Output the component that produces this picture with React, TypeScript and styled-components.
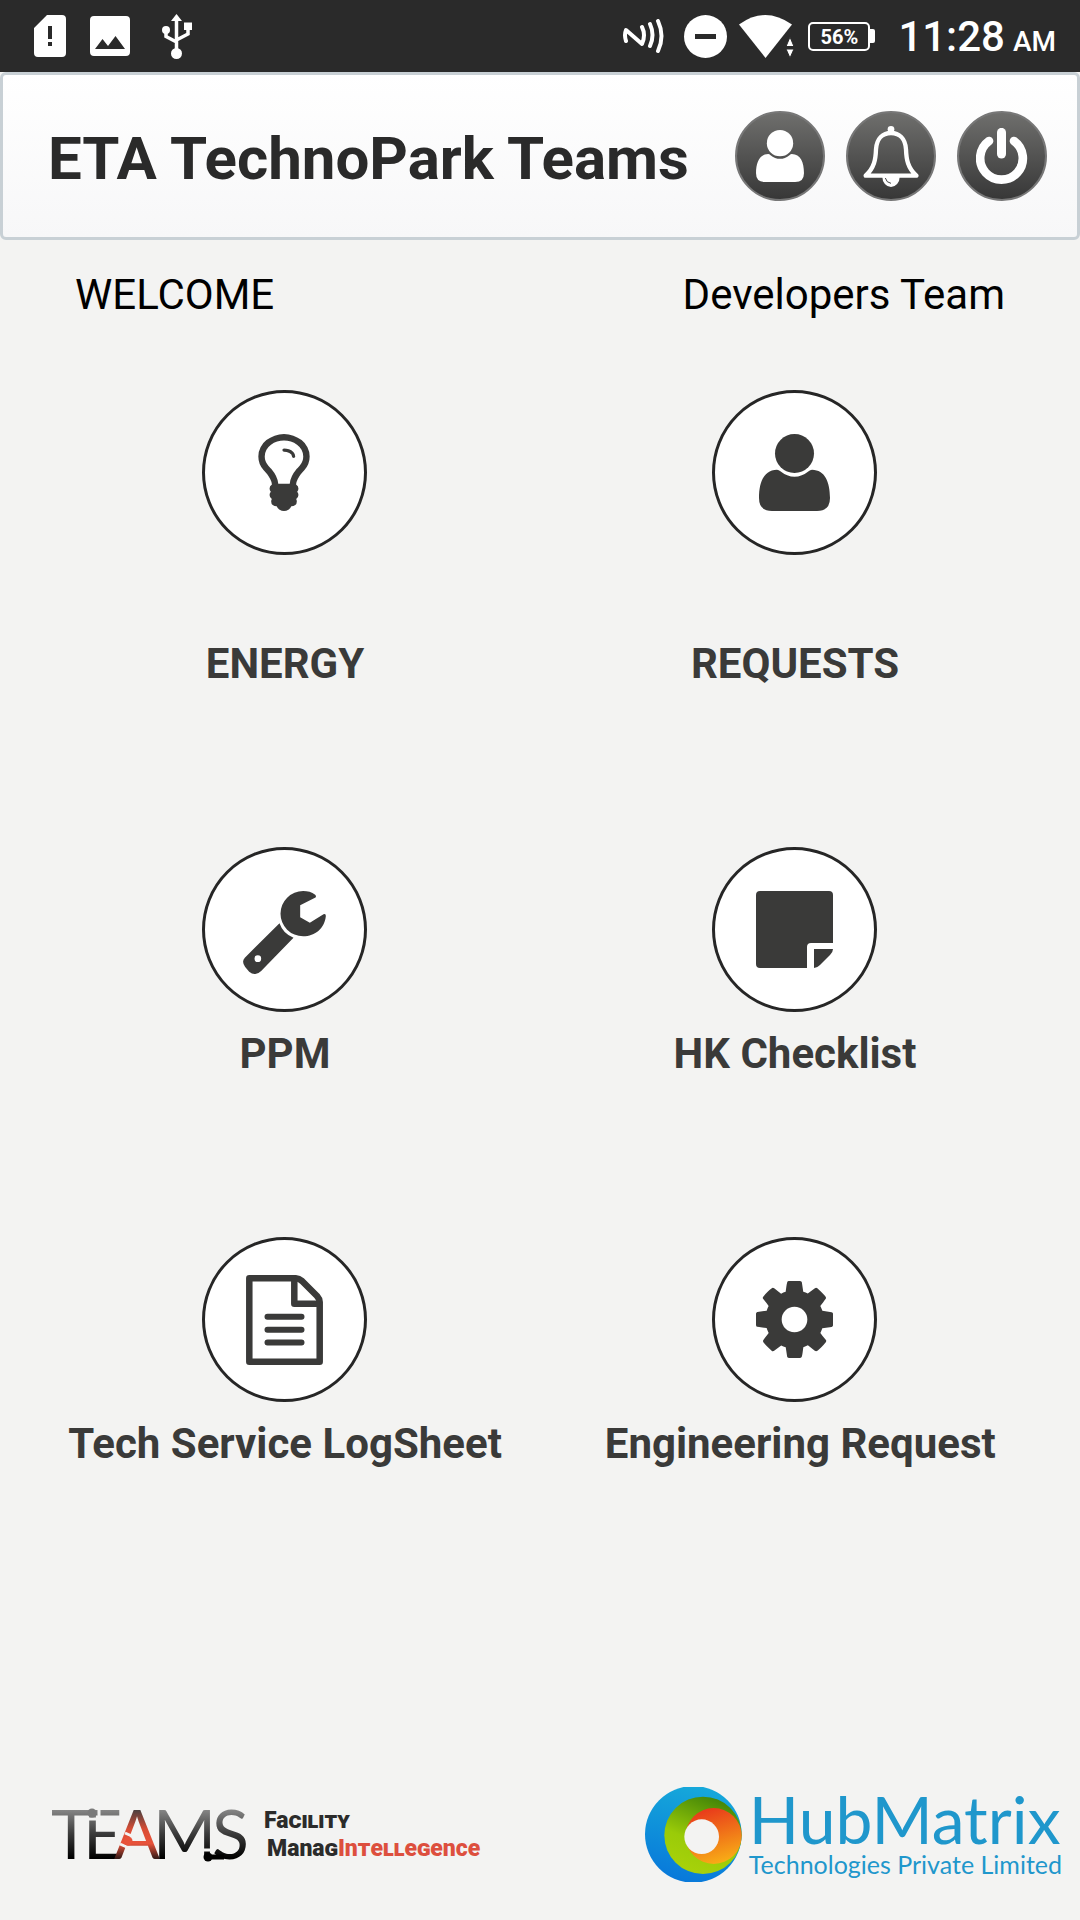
import React from "react";
import styled, { createGlobalStyle } from "styled-components";

const GlobalStyle = createGlobalStyle`
  * { box-sizing: border-box; }
  body { margin: 0; background: #f3f3f2; font-family: Roboto, "Liberation Sans", sans-serif; }
`;

const Page = styled.div`
  display: flex;
  flex-direction: column;
  min-height: 100vh;
`;

const StatusBar = styled.div`
  display: flex;
  align-items: center;
  justify-content: space-between;
  height: 72px;
  padding: 0 24px 0 34px;
  background: #2a2a2a;
  color: #fff;
`;

const StatusGroup = styled.div<{ $gap: number }>`
  display: flex;
  align-items: center;
  gap: ${(p) => p.$gap}px;
  svg { display: block; }
`;

const StatusSlot = styled.span<{ $before?: number; $after?: number }>`
  margin-left: ${(p) => p.$before ?? 0}px;
  margin-right: ${(p) => p.$after ?? 0}px;
`;

const Battery = styled.div`
  display: flex;
  align-items: center;
  margin-left: 2px;
  &::after {
    content: "";
    width: 5px;
    height: 14px;
    background: #fff;
    border-radius: 0 2px 2px 0;
  }
`;

const BatteryBody = styled.div`
  width: 62px;
  height: 29px;
  border: 2px solid #fff;
  border-radius: 5px;
  font-size: 20px;
  font-weight: 700;
  line-height: 26px;
  text-align: center;
`;

const Clock = styled.time`
  margin-left: 11px;
  padding-top: 6px;
  font-size: 42px;
  font-weight: 500;
  line-height: 50px;
  small { margin-left: 8px; font-size: 28px; }
`;

const Header = styled.header`
  display: flex;
  align-items: center;
  justify-content: space-between;
  height: 168px;
  padding: 0 30px 0 45px;
  border: 3px solid #c8d0d5;
  border-radius: 6px;
  background: linear-gradient(#ffffff, #f7f7f8);
`;

const Title = styled.h1`
  margin: 0;
  padding-top: 5px;
  font-size: 60px;
  font-weight: 700;
  line-height: 72px;
  color: #2a2a2a;
  white-space: nowrap;
`;

const Actions = styled.nav`
  display: flex;
  gap: 21px;
`;

const RoundButton = styled.button`
  display: grid;
  place-items: center;
  width: 90px;
  height: 90px;
  padding: 0;
  border: 2px solid #777;
  border-radius: 50%;
  background: linear-gradient(#70706e, #363636);
  background-origin: border-box;
  color: #fff;
  svg { display: block; }
`;

const Welcome = styled.section`
  display: flex;
  justify-content: space-between;
  padding: 30px 75px 0;
  font-size: 42px;
  line-height: 50px;
  color: #000;
`;

const Menu = styled.main`
  display: grid;
  grid-template-columns: 1fr 1fr;
  row-gap: 158px;
  padding: 70px 31px 70px 29px;
`;

const MenuItem = styled.button<{ $gap: number }>`
  display: flex;
  flex-direction: column;
  align-items: center;
  gap: ${(p) => p.$gap}px;
  padding: 0;
  border: 0;
  background: none;
  font: 700 42px/50px Roboto, "Liberation Sans", sans-serif;
  color: #3a3a39;
  white-space: pre;
`;

const Disc = styled.span`
  display: grid;
  place-items: center;
  width: 165px;
  height: 165px;
  border: 3px solid #262626;
  border-radius: 50%;
  background: #fff;
  svg { display: block; }
`;

const Label = styled.span`
  padding-left: 2px;
`;

const Footer = styled.footer`
  display: flex;
  align-items: center;
  justify-content: space-between;
  margin-top: auto;
  padding: 0 18px 38px 50px;
`;

const Brand = styled.div<{ $gap: number }>`
  display: flex;
  align-items: center;
  gap: ${(p) => p.$gap}px;
  svg { display: block; }
`;

const Tagline = styled.div`
  font-size: 23px;
  font-weight: 900;
  line-height: 28px;
  color: #2b2b2b;
  white-space: nowrap;
  div + div { padding-left: 3px; }
`;

const SmallCaps = styled.span`
  font-variant: small-caps;
`;

const Accent = styled.span`
  color: #dd4f3e;
`;

const HubText = styled.div`
  display: flex;
  flex-direction: column;
  padding-bottom: 4px;
  font-family: Lato, sans-serif;
  color: #1f97cc;
  white-space: nowrap;
`;

const HubName = styled.span`
  font-size: 66px;
  font-weight: 400;
  line-height: 62px;
`;

const HubSub = styled.span`
  font-size: 25px;
  font-weight: 400;
  line-height: 28px;
`;

const PersonIcon = ({ width, height }: { width: number; height: number }) => (
  <svg width={width} height={height} viewBox="0 0 71 77" fill="currentColor" aria-hidden="true">
    <circle cx="35.5" cy="19.5" r="19.5" />
    <path d="M18 35.7Q20 36 21 37Q35.5 48.500 50 37Q51 36 53 35.700C66 36 71 48 71 64Q71 77 58 77H13Q0 77 0 64C0 48 5 36 18 35.700Z" />
  </svg>
);

const BellIcon = () => (
  <svg width="56" height="61" viewBox="489 165 168 183" aria-hidden="true">
    <path d="M497 314C523 290 527 265 528 235C530 202 549 186 573 186C597 186 616 202 618 235C619 265 623 290 649 314Z" fill="none" stroke="#fff" strokeWidth="13" strokeLinejoin="round" />
    <circle cx="573" cy="175" r="10" fill="#fff" />
    <path d="M547 318a26 30 0 0 0 52 0Z" fill="#fff" />
    <path d="M556 321q3 14 17 16" fill="none" stroke="#444" strokeWidth="3" />
  </svg>
);

const PowerIcon = () => (
  <svg width="52" height="56" viewBox="828 166 156 168" fill="none" stroke="#fff" strokeLinecap="round" aria-hidden="true">
    <path d="M867 205A64 64 0 1 0 942 205" strokeWidth="26" />
    <path d="M904.500 179V244" strokeWidth="27" />
  </svg>
);

const BulbIcon = () => (
  <svg width="52" height="77" viewBox="0 128 1024 1536" fill="currentColor" aria-hidden="true">
    <path d="M736 576q0 13-9.500 22.500t-22.500 9.500-22.500-9.500-9.500-22.500q0-46-54-71t-106-25q-13 0-22.500-9.500t-9.500-22.500 9.500-22.500 22.500-9.500q50 0 99.500 16t87 54 37.500 90zm160 0q0-72-34.500-134t-90-101.500-123-62-136.500-22.500-136.500 22.500-123 62-90 101.500-34.500 134q0 101 68 180 10 11 30.500 33t30.500 33q128 153 141 298h228q13-145 141-298 10-11 30.500-33t30.500-33q68-79 68-180zm128 0q0 155-103 268-45 49-74.500 87t-59.500 95.500-34 107.500q47 28 47 82 0 37-25 64 25 27 25 64 0 52-45 81 13 23 13 47 0 46-31.500 71t-77.500 25q-20 44-60 70t-87 26-87-26-60-70q-46 0-77.500-25t-31.500-71q0-24 13-47-45-29-45-81 0-37 25-64-25-27-25-64 0-54 47-82-4-50-34-107.500t-59.500-95.500-74.500-87q-103-113-103-268 0-99 44.500-184.500t117-142 164-89 186.500-32.500 186.500 32.500 164 89 117 142 44.500 184.500z" />
  </svg>
);

const WrenchIcon = () => (
  <svg width="83" height="89" viewBox="189 165 248 267" fill="currentColor" aria-hidden="true">
    <path d="M405 194Q411 200 403 204L360 226V262L389 278L430 253Q437 250 437 258C434 294 405 319 369 319A68 68 0 1 1 369 183C382 183 395 186 405 194Z" />
    <path fillRule="evenodd" d="M298 280Q309 312 340 323L243 423Q226 440 207 425L195 411Q183 395 194 383ZM243 386A10 10 0 1 0 223 386A10 10 0 1 0 243 386Z" />
  </svg>
);

const NoteIcon = () => (
  <svg width="77" height="77" viewBox="0 0 77 77" fill="currentColor" aria-hidden="true">
    <path d="M4 0H73Q77 0 77 4V52H55Q51 52 51 56V77H4Q0 77 0 73V4Q0 0 4 0Z" />
    <path d="M58 58H77Q77 61 74 64L64 74Q61 77 58 77Z" />
  </svg>
);

const SheetIcon = () => (
  <svg width="77" height="90" viewBox="0 0 77 90" fill="none" stroke="currentColor" strokeWidth="6.500" strokeLinejoin="round" aria-hidden="true">
    <path d="M3.300 3.300H50Q53 3.300 56 6L71 21Q73.700 24 73.700 27V86.700H3.300Z" />
    <path d="M48.300 3.300V28.800H73.700" />
    <path d="M21.500 41.800H55.500M21.500 54.700H55.500M21.500 67.500H55.500" strokeLinecap="round" strokeWidth="6" />
  </svg>
);

const GearIcon = () => (
  <svg width="77" height="77" viewBox="128 128 1536 1536" fill="currentColor" aria-hidden="true">
    <path d="M1152 896q0-106-75-181t-181-75-181 75-75 181 75 181 181 75 181-75 75-181zm512-109v222q0 12-8 23t-20 13l-185 28q-19 54-39 91 35 50 107 138 10 12 10 25t-9 23q-27 37-99 108t-94 71q-12 0-26-9l-138-108q-44 23-91 38-16 136-29 186-7 28-36 28h-222q-14 0-24.500-8.500t-11.500-21.500l-28-184q-49-16-90-37l-141 107q-10 9-25 9-14 0-25-11-126-114-165-168-7-10-7-23 0-12 8-23 15-21 51-66.500t54-70.500q-27-50-41-99l-183-27q-13-2-21-12.500t-8-23.500v-222q0-12 8-23t19-13l186-28q14-46 39-92-40-57-107-138-10-12-10-24 0-10 9-23 26-36 98.500-107.500t94.500-71.500q13 0 26 10l138 107q44-23 91-38 16-136 29-186 7-28 36-28h222q14 0 24.500 8.500t11.500 21.500l28 184q49 16 90 37l142-107q9-9 24-9 13 0 25 10 129 119 165 170 7 8 7 22 0 12-8 23-15 21-51 66.500t-54 70.500q26 50 41 98l183 28q13 2 21 12.500t8 23.500z" />
  </svg>
);

const SimIcon = () => (
  <svg width="32" height="42" viewBox="0 0 32 42" aria-hidden="true">
    <path fill="#fff" fillRule="evenodd" d="M13 0H28Q32 0 32 4V38Q32 42 28 42H4Q0 42 0 38V13ZM14 11V24H18V11ZM14 27V31H18V27Z" />
  </svg>
);

const ImageIcon = () => (
  <svg width="40" height="40" viewBox="0 0 40 40" aria-hidden="true">
    <path fill="#fff" fillRule="evenodd" d="M4 0H36Q40 0 40 4V36Q40 40 36 40H4Q0 40 0 36V4Q0 0 4 0ZM5 33H35L25.500 20L18 30L12.500 23Z" />
  </svg>
);

const UsbIcon = () => (
  <svg width="30" height="45" viewBox="0 0 30 45" aria-hidden="true">
    <g fill="#fff">
      <path d="M14.500 0L20 7H9Z" />
      <circle cx="14.500" cy="39.500" r="5.500" />
      <circle cx="4" cy="16" r="4" />
      <path d="M22 8.500H30V16H22Z" />
    </g>
    <path d="M14.500 5V38M4 16V22.500L14.500 28M26 14V20L14.500 26" fill="none" stroke="#fff" strokeWidth="3.500" />
  </svg>
);

const NfcIcon = () => (
  <svg width="41" height="34" viewBox="0 0 41 34" fill="none" stroke="#fff" strokeWidth="4" strokeLinecap="round" strokeLinejoin="round" aria-hidden="true">
    <path d="M3 22Q1 16 3 11L19 25Q23 16 19 8" />
    <path d="M27 5Q32 16 27 27M35 2Q42 17 35 32" />
  </svg>
);

const DndIcon = () => (
  <svg width="43" height="43" viewBox="0 0 43 43" aria-hidden="true">
    <circle cx="21.500" cy="21.500" r="21.500" fill="#fff" />
    <path d="M11 21.500H32" stroke="#2a2a2a" strokeWidth="5" />
  </svg>
);

const WifiIcon = () => (
  <svg width="55" height="43" viewBox="0 0 55 43" fill="#fff" aria-hidden="true">
    <path d="M0 9.500Q26 -9.500 53 9.500L26.500 43Z" />
    <path d="M51 22L55 31.500H47ZM47 34H55L51 43Z" stroke="#2a2a2a" strokeWidth="1" />
  </svg>
);

const TeamsLogo = () => (
  <svg width="200" height="90" viewBox="0 -14 200 90" role="img" aria-label="TEAMS">
    <defs>
      <linearGradient id="steel" gradientUnits="userSpaceOnUse" x1="0" y1="6" x2="0" y2="54">
        <stop offset="0" stopColor="#858585" />
        <stop offset="0.500" stopColor="#3a3a3a" />
        <stop offset="1" stopColor="#000" />
      </linearGradient>
      <linearGradient id="ember" gradientUnits="userSpaceOnUse" x1="0" y1="6" x2="0" y2="54">
        <stop offset="0" stopColor="#4b4040" />
        <stop offset="0.400" stopColor="#d94c34" />
        <stop offset="0.700" stopColor="#e8523a" />
        <stop offset="1" stopColor="#3a1c18" />
      </linearGradient>
    </defs>
    <text x="1 33 64 103 162" y="55" fontFamily="Lato, sans-serif" fontSize="68" fill="url(#steel)">
      TE<tspan fill="url(#ember)">A</tspan>MS
    </text>
    <g stroke="#f3f3f2" strokeWidth="3">
      <path d="M37 15H46M49 4V13M75 29L84 33M70 40L79 44M150 46H163" />
    </g>
    <circle cx="42" cy="9" r="4.500" fill="#7a7a7a" />
    <circle cx="78" cy="37" r="4.500" fill="#e8523a" />
    <path d="M158 53H174" stroke="#000" strokeWidth="5" />
    <circle cx="158" cy="53" r="4.500" fill="#000" />
  </svg>
);

const SwirlLogo = () => (
  <svg width="97" height="95" viewBox="48 51 291 285" aria-hidden="true">
    <defs>
      <linearGradient id="blue" x1="0.600" y1="0" x2="0.400" y2="1">
        <stop offset="0" stopColor="#16a9da" />
        <stop offset="1" stopColor="#0878da" />
      </linearGradient>
      <linearGradient id="green" x1="0.700" y1="0" x2="0.300" y2="1">
        <stop offset="0" stopColor="#3f8208" />
        <stop offset="0.600" stopColor="#9acb08" />
        <stop offset="1" stopColor="#a9d20a" />
      </linearGradient>
      <linearGradient id="orange" x1="0.300" y1="0" x2="0.600" y2="1">
        <stop offset="0" stopColor="#e8361b" />
        <stop offset="1" stopColor="#f8ae16" />
      </linearGradient>
    </defs>
    <circle cx="193" cy="193" r="145" fill="url(#blue)" />
    <circle cx="222" cy="196" r="116" fill="url(#green)" />
    <circle cx="254" cy="198" r="84" fill="url(#orange)" />
    <circle cx="218" cy="200" r="52" fill="#f3f3f2" />
  </svg>
);

const items = [
  { label: "ENERGY", icon: <BulbIcon />, gap: 84 },
  { label: "REQUESTS", icon: <PersonIcon width={71} height={77} />, gap: 84 },
  { label: "PPM", icon: <WrenchIcon />, gap: 17 },
  { label: "HK Checklist", icon: <NoteIcon />, gap: 17 },
  { label: "Tech Service LogSheet", icon: <SheetIcon />, gap: 17 },
  { label: " Engineering Request", icon: <GearIcon />, gap: 17 },
];

export default function App() {
  return (
    <Page>
      <GlobalStyle />
      <StatusBar>
        <StatusGroup $gap={24}>
          <SimIcon />
          <ImageIcon />
          <StatusSlot $before={8}>
            <UsbIcon />
          </StatusSlot>
        </StatusGroup>
        <StatusGroup $gap={12}>
          <StatusSlot $after={8}>
            <NfcIcon />
          </StatusSlot>
          <DndIcon />
          <WifiIcon />
          <Battery>
            <BatteryBody>56%</BatteryBody>
          </Battery>
          <Clock>
            11:28<small>AM</small>
          </Clock>
        </StatusGroup>
      </StatusBar>
      <Header>
        <Title>ETA TechnoPark Teams</Title>
        <Actions>
          <RoundButton type="button" aria-label="Profile">
            <PersonIcon width={48} height={52} />
          </RoundButton>
          <RoundButton type="button" aria-label="Notifications">
            <BellIcon />
          </RoundButton>
          <RoundButton type="button" aria-label="Log out">
            <PowerIcon />
          </RoundButton>
        </Actions>
      </Header>
      <Welcome>
        <span>WELCOME</span>
        <span>Developers Team</span>
      </Welcome>
      <Menu>
        {items.map((item) => (
          <MenuItem key={item.label} type="button" $gap={item.gap}>
            <Disc>{item.icon}</Disc>
            <Label>{item.label}</Label>
          </MenuItem>
        ))}
      </Menu>
      <Footer>
        <Brand $gap={14}>
          <TeamsLogo />
          <Tagline>
            <div>
              Fa<SmallCaps>cility</SmallCaps>
            </div>
            <div>
              Mana<SmallCaps>g</SmallCaps>
              <Accent>
                In<SmallCaps>t</SmallCaps>e<SmallCaps>ll</SmallCaps>e<SmallCaps>g</SmallCaps>ence
              </Accent>
            </div>
          </Tagline>
        </Brand>
        <Brand $gap={7}>
          <SwirlLogo />
          <HubText>
            <HubName>HubMatrix</HubName>
            <HubSub>Technologies Private Limited</HubSub>
          </HubText>
        </Brand>
      </Footer>
    </Page>
  );
}
